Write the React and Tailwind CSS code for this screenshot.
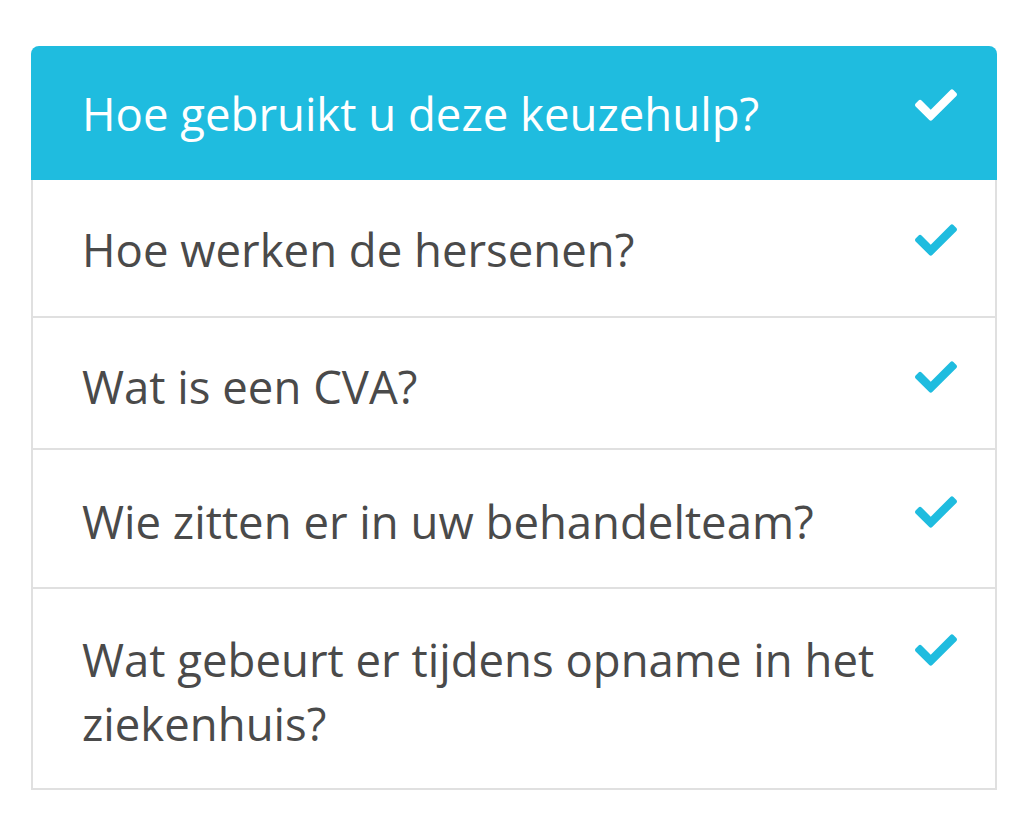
import React from 'react';
import { FaCheck } from 'react-icons/fa';

// spacing per row follows the screenshot
const steps = [
    { title: 'Hoe werken de hersenen?', pad: 'pt-[37px] pb-[35px] border-b-2' },
    { title: 'Wat is een CVA?', pad: 'pt-[36px] pb-[30px] border-b-2' },
    { title: 'Wie zitten er in uw behandelteam?', pad: 'pt-[39px] pb-[34px] border-b-2' },
    { title: 'Wat gebeurt er tijdens opname in het ziekenhuis?', pad: 'pt-[38px] pb-[33px]' },
];

const App = () => {
    return (
        <div className="min-h-screen bg-white pt-[46px] pl-[31px]" style={{ fontFamily: '"Open Sans", "Liberation Sans", sans-serif' }}>
            <div className="w-[966px] rounded-t-[8px] overflow-hidden">
                {/* active step */}
                <div className="flex items-start justify-between gap-[30px] bg-[#1fbcdf] pl-[51px] pr-[40px] py-[35px] text-white">
                    <span className="text-[45.5px] leading-[64px]">Hoe gebruikt u deze keuzehulp?</span>
                    <FaCheck className="mt-[3px] h-[42px] w-[42px] shrink-0" />
                </div>

                <div className="border-x-2 border-b-2 border-[#e0e0e0]">
                    {steps.map(step => (
                        <div
                            key={step.title}
                            className={`flex items-start justify-between gap-[30px] pl-[49px] pr-[38px] text-[#4a4a4a] border-[#e0e0e0] ${step.pad}`}
                        >
                            <span className="flex-1 text-[45.5px] leading-[64px]">{step.title}</span>
                            <FaCheck className="mt-[2px] h-[42px] w-[42px] shrink-0 text-[#1fbcdf]" />
                        </div>
                    ))}
                </div>
            </div>
        </div>
    );
};

export default App;
